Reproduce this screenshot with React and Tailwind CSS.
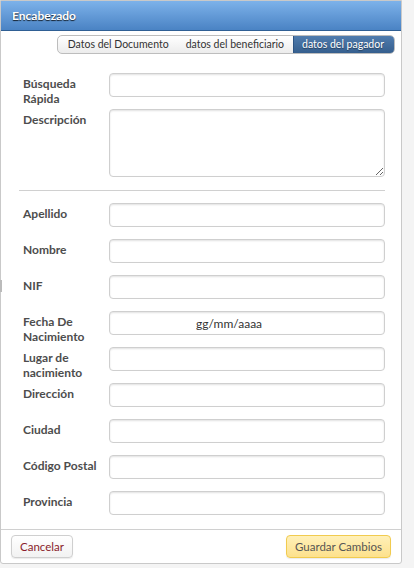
import React from "react";

const inputCls =
  "block w-full h-6 rounded-[4px] border border-[#cfcfcf] bg-white shadow-[inset_0_1px_2px_rgba(0,0,0,0.12)] outline-none px-2 text-[12px] text-[#333]";

function Row({ label, children, h = "h-6" }) {
  return (
    <div className={`flex items-start ${h} mb-3`}>
      <div className="w-[90px] shrink-0 pl-1 pt-[3px] text-[12px] leading-[15px] font-bold text-[#4d4d4d]">
        {label}
      </div>
      <div className="flex-1">{children}</div>
    </div>
  );
}

export default function App() {
  return (
    <div
      className="w-[414px] h-[568px] bg-[#f4f4f4] overflow-hidden relative"
      style={{ fontFamily: "Lato, 'Open Sans', sans-serif" }}
    >
      <div className="absolute left-0 top-[280px] w-[2px] h-[12px] bg-[#bbb]" />
      <div className="w-[402px] h-[564px] bg-white border border-[#c9c9c9] rounded-b-[3px] flex flex-col">
        <div className="h-[30px] shrink-0 bg-gradient-to-b from-[#7db2ea] to-[#4a83c4] border-b border-[#2f5f94] flex items-center pl-[11px]">
          <span className="text-white font-bold text-[12px] [text-shadow:0_1px_1px_rgba(0,0,0,0.8)]">
            Encabezado
          </span>
        </div>
        <div className="flex justify-end pr-[6px] pt-[4px]">
          <div className="flex h-[19px] rounded-[5px] border border-[#bdbdbd] bg-gradient-to-b from-white to-[#ececec] text-[10.5px] overflow-hidden">
            <div className="pl-[10px] pr-[8px] flex items-center text-[#333]">Datos del Documento</div>
            <div className="px-[9px] flex items-center text-[#333]">datos del beneficiario</div>
            <div className="pl-[8px] pr-[10px] flex items-center text-white bg-gradient-to-b from-[#4f7cae] to-[#365f8e] border-l border-[#2e5584] [text-shadow:0_1px_1px_rgba(0,0,0,0.4)]">
              datos del pagador
            </div>
          </div>
        </div>
        <div className="flex-1 pl-[18px] pr-[16px] pt-[19px]">
          <Row label={<>Búsqueda<br />Rápida</>}>
            <input className={inputCls} />
          </Row>
          <Row label="Descripción" h="h-[68px]">
            <textarea className="block w-full h-[68px] rounded-[4px] border border-[#cfcfcf] bg-white shadow-[inset_0_1px_2px_rgba(0,0,0,0.12)] outline-none px-2 text-[12px] resize" />
          </Row>
          <div className="border-t border-[#d0d0d0] mt-[13px] mb-[12px]" />
          <Row label="Apellido"><input className={inputCls} /></Row>
          <Row label="Nombre"><input className={inputCls} /></Row>
          <Row label="NIF"><input className={inputCls} /></Row>
          <Row label={<>Fecha De<br />Nacimiento</>}>
            <input className={`${inputCls} pl-[86px]`} defaultValue="gg/mm/aaaa" />
          </Row>
          <Row label={<>Lugar de<br />nacimiento</>}><input className={inputCls} /></Row>
          <Row label="Dirección"><input className={inputCls} /></Row>
          <Row label="Ciudad"><input className={inputCls} /></Row>
          <Row label="Código Postal"><input className={inputCls} /></Row>
          <Row label="Provincia"><input className={inputCls} /></Row>
        </div>
        <div className="h-[34px] shrink-0 border-t border-[#d0d0d0] flex items-center justify-between pl-[10px] pr-[10px]">
          <button className="h-[23px] w-[62px] rounded-[4px] border border-[#cfcfcf] bg-gradient-to-b from-white to-[#f2f2f2] text-[11.5px] text-[#8a1c2b] shadow-[0_1px_1px_rgba(0,0,0,0.08)]">
            Cancelar
          </button>
          <button className="h-[23px] w-[105px] rounded-[4px] border border-[#f1cb4f] bg-gradient-to-b from-[#fff0b8] to-[#fde18c] text-[11.5px] text-[#555] shadow-[0_1px_1px_rgba(0,0,0,0.08)]">
            Guardar Cambios
          </button>
        </div>
      </div>
    </div>
  );
}
